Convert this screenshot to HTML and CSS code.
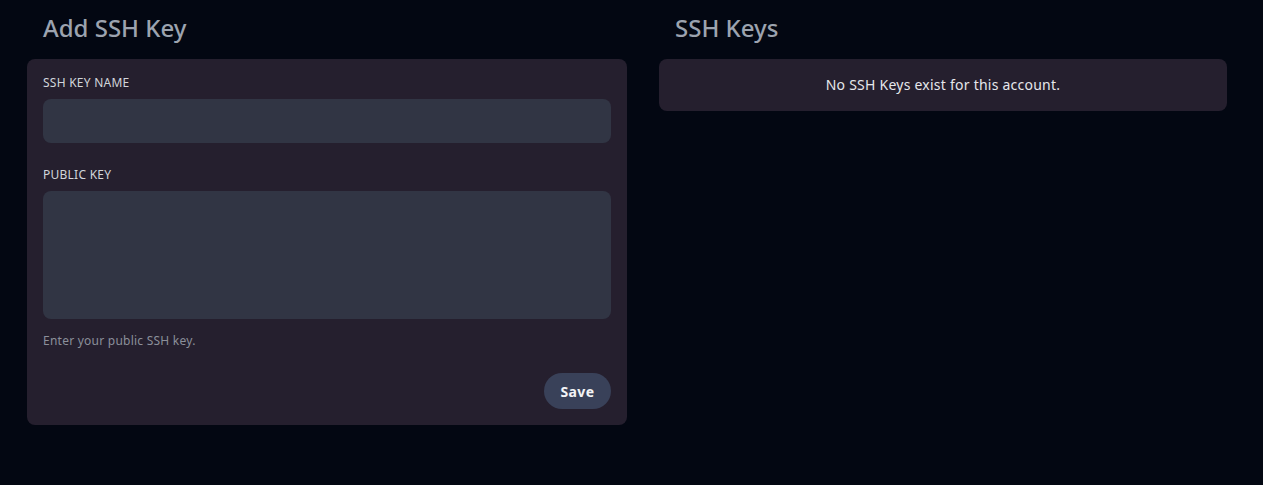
FILE: index.html
```html
<!DOCTYPE html>
<html lang="en">
<head>
<meta charset="utf-8">
<title>SSH Keys</title>
<link rel="stylesheet" href="styles.css">
</head>
<body>
<main class="page">
  <section class="col col-add">
    <h2 class="title">Add SSH Key</h2>
    <form class="card form-card">
      <label class="label" for="keyname">SSH KEY NAME</label>
      <input class="field" id="keyname" type="text">
      <label class="label label-gap" for="pubkey">PUBLIC KEY</label>
      <textarea class="field area" id="pubkey"></textarea>
      <p class="help">Enter your public SSH key.</p>
      <div class="actions">
        <button class="btn" type="button">Save</button>
      </div>
    </form>
  </section>
  <section class="col col-list">
    <h2 class="title">SSH Keys</h2>
    <div class="card empty-card">No SSH Keys exist for this account.</div>
  </section>
</main>
</body>
</html>
```
FILE: styles.css
```css
html, body {
  margin: 0;
  padding: 0;
  background: #030712;
  font-family: "Noto Sans", "Open Sans", sans-serif;
}
.page {
  display: flex;
  gap: 32px;
  padding: 12px 36px 0 27px;
  align-items: flex-start;
}
.col-add { width: 600px; }
.col-list { width: 568px; }
.title {
  margin: 0 0 15px 16px;
  font-size: 24px;
  line-height: 32px;
  font-weight: 500;
  color: #9ca3af;
}
.card {
  background: #251f2e;
  border-radius: 8px;
  box-sizing: border-box;
}
.form-card {
  padding: 16px 16px 16px;
  display: flex;
  flex-direction: column;
}
.label {
  display: block;
  font-size: 12px;
  line-height: 16px;
  letter-spacing: 0.25px;
  color: #d1d5db;
  margin-bottom: 8px;
}
.label-gap { margin-top: 24px; }
.field {
  display: block;
  box-sizing: border-box;
  width: 100%;
  height: 44px;
  border: none;
  border-radius: 8px;
  background: #313544;
  outline: none;
  resize: none;
  padding: 0;
  margin: 0;
}
.area { height: 128px; }
.help {
  margin: 14px 0 0;
  font-size: 12px;
  line-height: 16px;
  letter-spacing: 0.24px;
  color: #8b8f9a;
}
.actions {
  display: flex;
  justify-content: flex-end;
  margin-top: 24px;
}
.btn {
  height: 36px;
  width: 67px;
  border: none;
  border-radius: 18px;
  background: #394159;
  color: #f3f4f6;
  font-family: "Noto Sans", sans-serif;
  font-weight: 700;
  font-size: 14px;
  letter-spacing: 0.4px;
  padding: 0;
}
.empty-card {
  height: 52px;
  display: flex;
  align-items: center;
  justify-content: center;
  padding-bottom: 2px;
  font-size: 14px;
  letter-spacing: 0.24px;
  color: #e5e7eb;
}
```
